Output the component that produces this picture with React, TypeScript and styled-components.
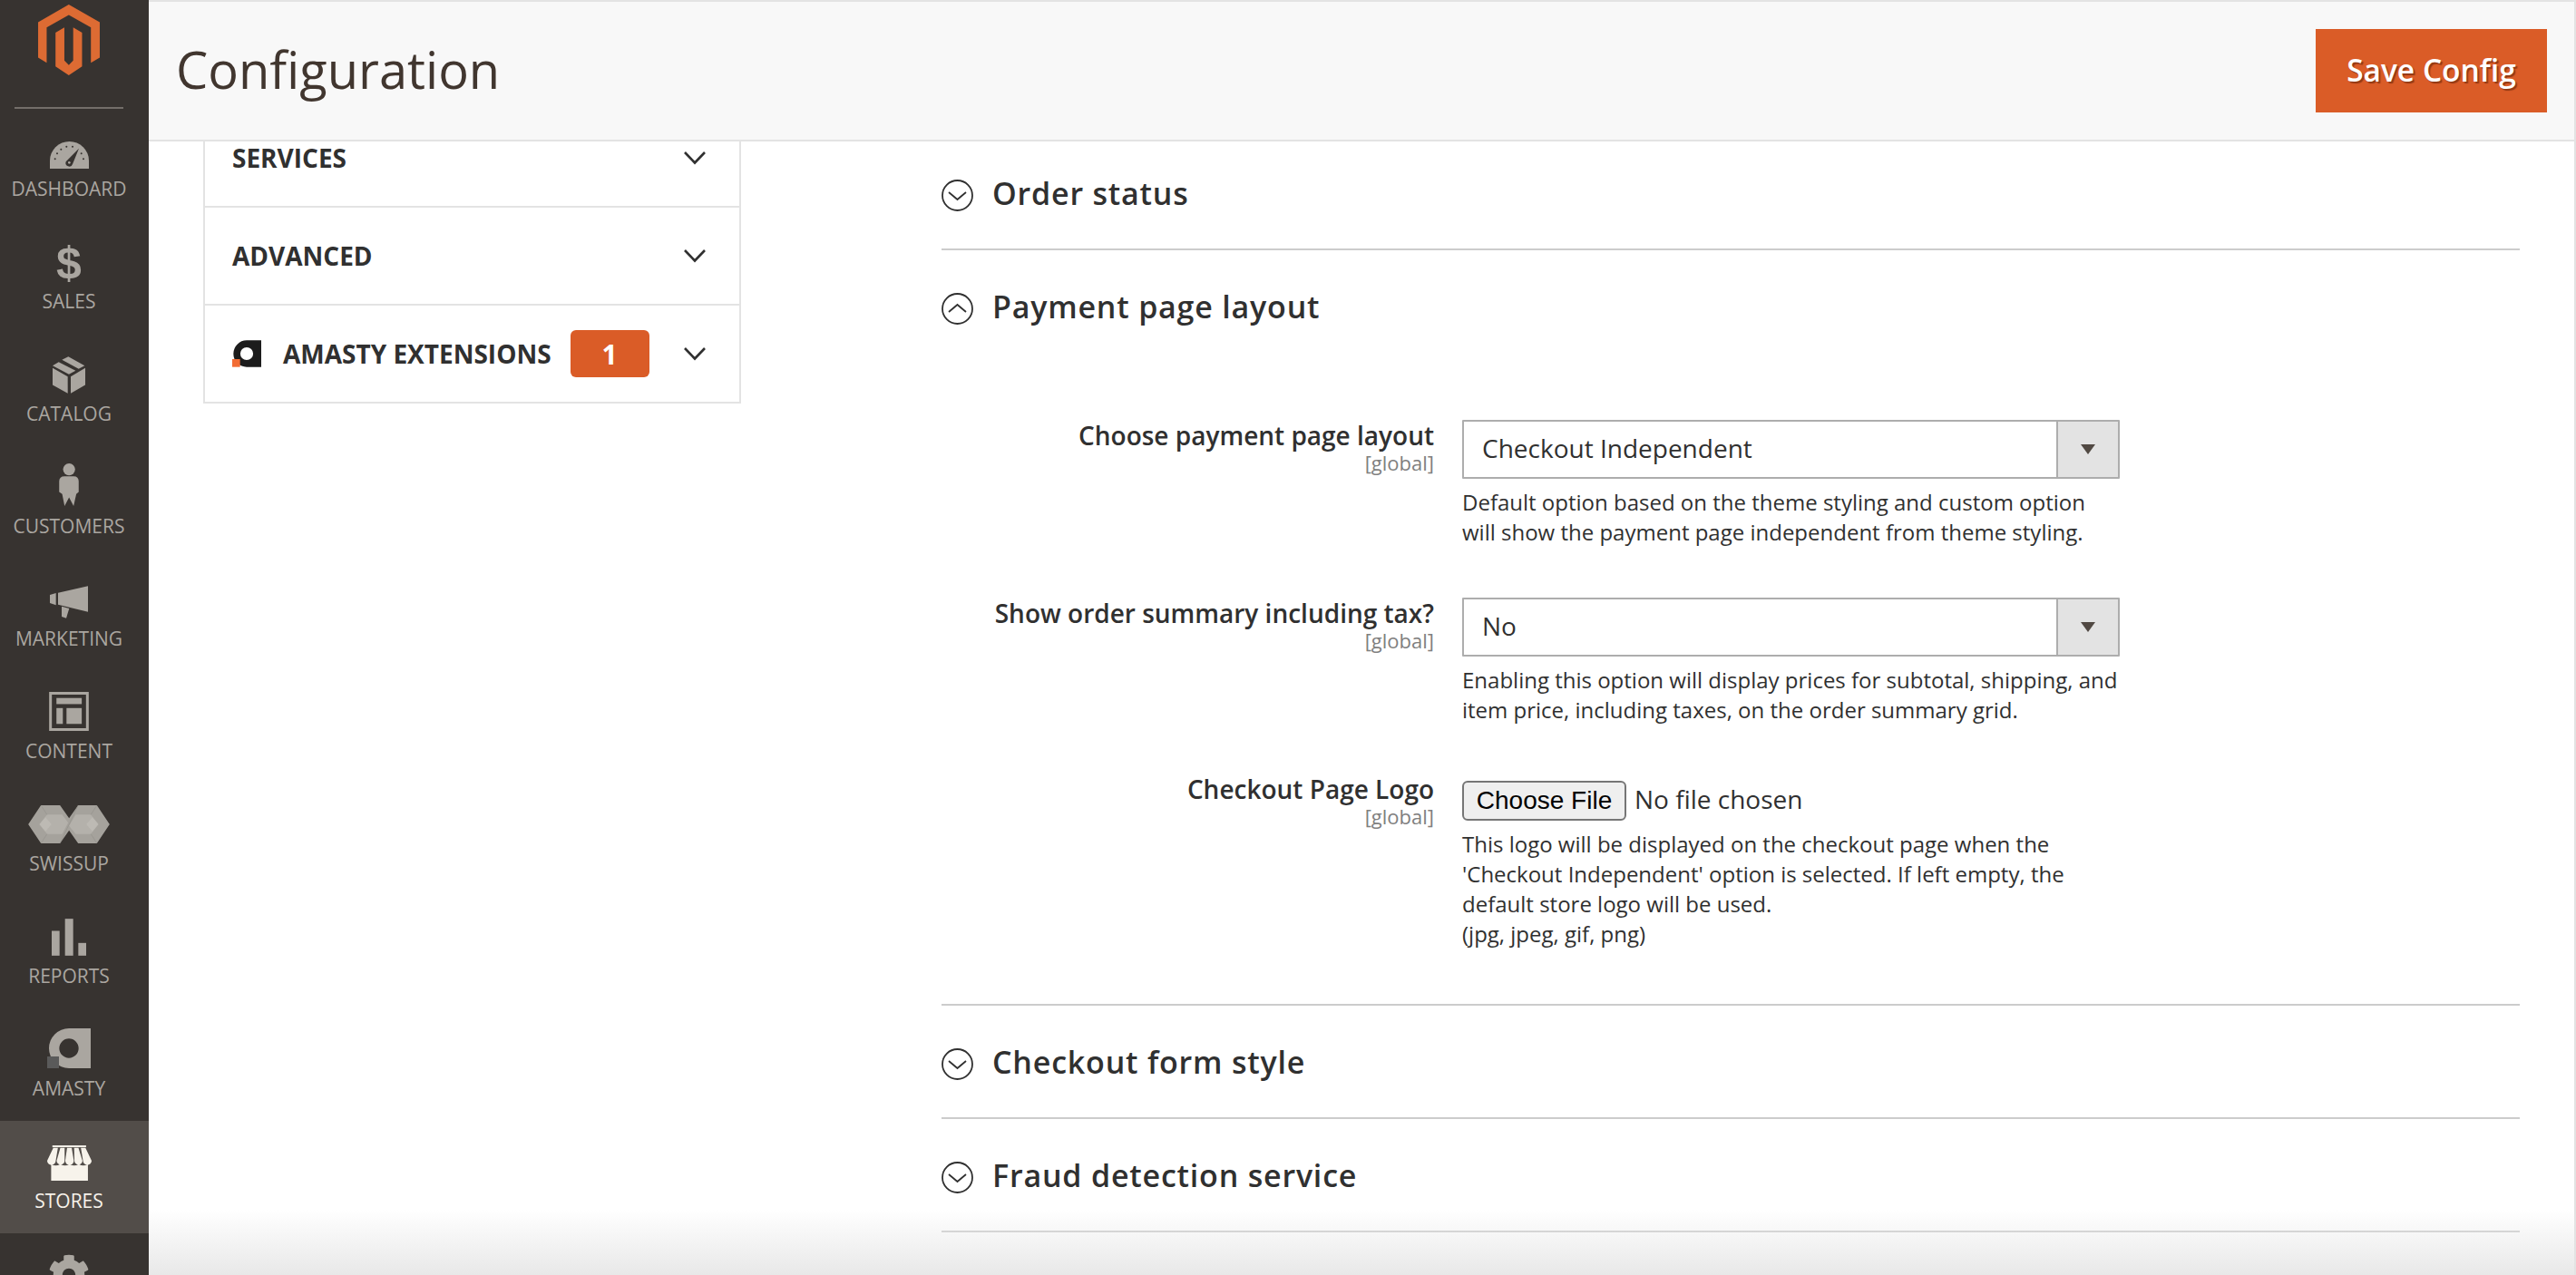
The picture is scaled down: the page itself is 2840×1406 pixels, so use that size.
import React from "react";
import styled, { createGlobalStyle } from "styled-components";
import { FaCog } from "react-icons/fa";

const colors = {
  rail: "#373330",
  railActive: "#524d49",
  railText: "#aaa6a0",
  railTextActive: "#f7f3eb",
  orange: "#da5c27",
  ink: "#303030",
  line: "#e3e3e3",
  rule: "#cccccc",
};

const GlobalStyle = createGlobalStyle`
  html, body {
    margin: 0;
    height: 100%;
    overflow: hidden;
    background: #fff;
    font-family: "Open Sans", sans-serif;
    color: ${colors.ink};
  }
  * { box-sizing: border-box; }
`;

const Page = styled.div`
  display: flex;
  width: 2840px;
  height: 1406px;
  overflow: hidden;
`;

/* left rail */
const Rail = styled.nav`
  flex: 0 0 164px;
  height: 1406px;
  overflow: hidden;
  background: ${colors.rail};
`;

const LogoBox = styled.div`
  display: flex;
  flex-direction: column;
  width: 152px;
  height: 120px;
  padding-top: 5px;
  align-items: center;
`;

const LogoRule = styled.div`
  flex: 0 0 2px;
  width: 120px;
  margin-top: 35px;
  background: #736e69;
`;

const RailItem = styled.a<{ $active?: boolean }>`
  display: flex;
  flex-direction: column;
  align-items: center;
  height: 124px;
  padding-right: 12px;
  background: ${(p) => (p.$active ? colors.railActive : "transparent")};
  color: ${(p) => (p.$active ? colors.railTextActive : colors.railText)};
`;

const RailIcon = styled.div`
  display: flex;
  align-items: flex-end;
  justify-content: center;
  height: 66px;
  margin-bottom: 10px;
`;

const RailLabel = styled.span`
  font-size: 21px;
  line-height: 24px;
  text-transform: uppercase;
  white-space: nowrap;
`;

const Gear = styled(FaCog)`
  flex: none;
  margin-bottom: -3px;
`;

/* main column */
const Main = styled.main`
  position: relative;
  flex: 1;
  height: 1406px;
  overflow: hidden;
  border-right: 2px solid ${colors.line};
`;

const Header = styled.header`
  display: flex;
  align-items: center;
  justify-content: space-between;
  height: 156px;
  padding: 0 30px;
  background: #f8f8f8;
  border-top: 2px solid ${colors.line};
  border-bottom: 2px solid ${colors.line};
`;

const Title = styled.h1`
  margin: 0 0 4px;
  font-size: 56px;
  font-weight: 400;
  line-height: 76px;
  color: #41362f;
`;

const SaveButton = styled.button`
  width: 255px;
  height: 92px;
  padding: 0 0 3px;
  border: 0;
  background: ${colors.orange};
  color: #fff;
  font-family: "Open Sans", sans-serif;
  font-size: 33.5px;
  font-weight: 600;
  text-shadow: 2px 2px 1px rgba(90, 30, 5, 0.55);
`;

const Body = styled.div`
  display: flex;
  justify-content: space-between;
  padding: 0 60px 0 60px;
`;

/* config tabs on the left */
const Tabs = styled.div`
  flex: 0 0 593px;
  align-self: flex-start;
  border: 2px solid ${colors.line};
  border-top: 0;
`;

const TabRow = styled.div<{ $cut?: boolean }>`
  display: flex;
  align-items: ${(p) => (p.$cut ? "flex-start" : "center")};
  height: ${(p) => (p.$cut ? "71px" : "108px")};
  padding: 0 36px 0 30px;
  & + & {
    border-top: 2px solid ${colors.line};
  }
`;

const TabName = styled.span`
  font-size: 28px;
  line-height: 36px;
  font-weight: 700;
  text-transform: uppercase;
  white-space: nowrap;
`;

const TabLogo = styled.svg`
  width: 32px;
  height: 30px;
  margin-right: 24px;
`;

const Badge = styled.span`
  display: flex;
  align-items: center;
  justify-content: center;
  width: 87px;
  height: 52px;
  margin-left: 21px;
  border-radius: 6px;
  background: ${colors.orange};
  color: #fff;
  font-size: 30px;
  font-weight: 700;
`;

const Chevron = styled.svg`
  width: 26px;
  height: 16px;
  margin-left: auto;
  fill: none;
  stroke: ${colors.ink};
  stroke-width: 2.6;
`;

const TabChevron = styled(Chevron)<{ $cut?: boolean }>`
  margin-top: ${(p) => (p.$cut ? "10px" : "0")};
`;

/* settings on the right */
const Settings = styled.div`
  flex: 0 0 1740px;
`;

const Section = styled.section`
  & + & {
    border-top: 2px solid ${colors.rule};
  }
`;

const SectionHead = styled.div<{ $first?: boolean }>`
  display: flex;
  align-items: center;
  gap: 21px;
  padding: ${(p) => (p.$first ? "42px" : "47px")} 0 41px;
`;

const SectionTitle = styled.h2`
  margin: -4px 0 0;
  font-size: 34px;
  line-height: 35px;
  font-weight: 600;
  letter-spacing: 0.8px;
  white-space: nowrap;
`;

const Toggle = styled.svg`
  flex: 0 0 35px;
  width: 35px;
  height: 35px;
  fill: none;
  stroke: ${colors.ink};
  stroke-width: 1.8;
`;

const FieldList = styled.div`
  display: flex;
  flex-direction: column;
  gap: 56px;
  padding: 64px 0 61px;
`;

const Field = styled.div`
  display: grid;
  grid-template-columns: 543px 725px;
  column-gap: 31px;
`;

const FileField = styled(Field)`
  margin-top: -2px;
`;

const LabelCell = styled.div`
  text-align: right;
`;

const Label = styled.label`
  display: block;
  font-size: 28px;
  line-height: 34px;
  font-weight: 600;
  white-space: nowrap;
`;

const Scope = styled.div`
  font-size: 22px;
  line-height: 26px;
  color: #808080;
`;

const SelectBox = styled.div`
  display: flex;
  height: 65px;
  border: 2px solid #adadad;
  border-radius: 1px;
`;

const NativeSelect = styled.select`
  flex: 1;
  min-width: 0;
  padding: 0 0 3px 20px;
  border: 0;
  outline: 0;
  appearance: none;
  background: #fff;
  color: ${colors.ink};
  font-family: "Open Sans", sans-serif;
  font-size: 28px;
`;

const SelectArrow = styled.div`
  display: flex;
  align-items: center;
  justify-content: center;
  flex: 0 0 68px;
  border-left: 2px solid #adadad;
  background: ${colors.line};
  &::after {
    content: "";
    border-left: 8px solid transparent;
    border-right: 8px solid transparent;
    border-top: 11px solid #514943;
  }
`;

const FileInput = styled.input`
  display: block;
  margin-top: 8px;
  height: 44px;
  width: 500px;
  font-family: "Open Sans", sans-serif;
  font-size: 28px;
  color: ${colors.ink};
  &::file-selector-button {
    width: 181px;
    height: 44px;
    margin-right: 9px;
    padding: 0;
    border: 2px solid #767676;
    border-radius: 6px;
    background: #efefef;
    color: #000;
    font-family: "Liberation Sans", sans-serif;
    font-size: 28px;
  }
`;

const Help = styled.p`
  margin: 9px 0 0;
  font-size: 24px;
  line-height: 33px;
  white-space: nowrap;
`;

const BottomFade = styled.div`
  position: absolute;
  left: 0;
  right: 0;
  bottom: 0;
  height: 72px;
  background: linear-gradient(rgba(232, 232, 232, 0), #e8e8e8);
  pointer-events: none;
`;

const Glyph = styled.span`
  margin-bottom: -3px;
  font-family: "Liberation Sans", sans-serif;
  font-size: 50px;
  font-weight: 700;
  line-height: 46px;
`;

const Logo = () => (
  <svg width="70" height="80" viewBox="124 15 209 240" fill="#dd6b33">
    <path d="M228 15 333 75V195L303 213V93L228 50 153 93V213L124 195V75Z" />
    <path d="M183 110 213 93V205L228 220 243 205V93L273 110V225L228 255 183 225Z" />
  </svg>
);

const GaugeIcon = () => (
  <svg width="43" height="30" viewBox="162 465 129 90">
    <path fill="currentColor" d="M162 555V528A64.5 63 0 0 1 291 528V555Z" />
    <g fill={colors.rail}>
      <circle cx="179" cy="523" r="3" />
      <circle cx="186" cy="505" r="3" />
      <circle cx="199" cy="491" r="3" />
      <circle cx="217" cy="482" r="3" />
      <circle cx="237" cy="482" r="3" />
      <circle cx="273" cy="523" r="3" />
      <circle cx="266" cy="505" r="3" />
      <path d="M215 532 258 488 237 540A11 11 0 0 1 215 532Z" />
    </g>
    <circle cx="226" cy="535" r="4" fill="currentColor" />
  </svg>
);

const BoxIcon = () => (
  <svg width="36" height="41" viewBox="172 1178 108 122" fill="currentColor">
    <path d="M224 1178 278 1208 258 1219 203 1189Z" />
    <path d="M192 1196 248 1225 226 1237 172 1208Z" />
    <path d="M172 1216 222 1244V1300L172 1272Z" />
    <path d="M232 1244 280 1216V1272L232 1300Z" />
  </svg>
);

const PersonIcon = () => (
  <svg width="22" height="47" viewBox="197 90 65 142" fill="currentColor">
    <circle cx="230" cy="110" r="20" />
    <path d="M197 150Q197 133 215 133H245Q262 133 262 150V185L254 192 245 232 230 203 215 232 207 192 197 185Z" />
  </svg>
);

const MegaphoneIcon = () => (
  <svg width="42" height="36" viewBox="165 497 126 106" fill="currentColor">
    <path d="M165 526 185 520V560L165 553Z" />
    <path d="M192 519 291 497V582L192 558Z" />
    <path d="M204 564 229 571 219 603 204 598Z" />
  </svg>
);

const ContentIcon = () => (
  <svg width="44" height="43" viewBox="163 850 130 128" fill="currentColor">
    <path fillRule="evenodd" d="M163 850H293V978H163ZM172 859V969H284V859Z" />
    <rect x="187" y="870" width="83" height="20" />
    <rect x="187" y="903" width="21" height="52" />
    <rect x="220" y="903" width="50" height="52" />
  </svg>
);

const SwissupIcon = () => (
  <svg width="90" height="42" viewBox="93 1227 269 126">
    <path fill="#a5a29c" d="M93 1290 135 1227H198L228 1270 258 1227H320L362 1290 320 1353H258L228 1310 198 1353H135Z" />
    <path fill="#b4b1ab" d="M130 1290 155 1258H205L225 1285 205 1322H155ZM325 1290 300 1258H250L228 1295 250 1322H300Z" />
    <path fill="#bdbab4" d="M130 1290 150 1267 170 1290 150 1313ZM325 1290 305 1267 285 1290 305 1313Z" />
    <path fill="none" stroke="#8f8c86" strokeWidth="1.5" d="M198 1353 258 1227M135 1227 155 1258M320 1227 300 1258M135 1353 155 1322M320 1353 300 1322" />
  </svg>
);

const BarsIcon = () => (
  <svg width="38" height="41" viewBox="171 160 114 122" fill="currentColor">
    <rect x="171" y="200" width="26" height="82" />
    <rect x="215" y="160" width="27" height="122" />
    <rect x="259" y="240" width="26" height="42" />
  </svg>
);

const AmastyShape = ({ dot, body }: { dot: string; body: string }) => (
  <>
    <path
      fill={body}
      fillRule="evenodd"
      d="M228 528H300V660H228A66 66 0 0 1 228 528ZM228 562A32 32 0 1 0 228 626 32 32 0 1 0 228 562Z"
    />
    <rect x="156" y="621" width="39" height="39" fill={dot} />
  </>
);

const StoreIcon = () => (
  <svg width="49" height="39" viewBox="155 918 145 115" fill="currentColor">
    <rect x="172" y="918" width="110" height="6" />
    <path d="M175 926H190L183 968A14 14 0 0 1 155 968Z" />
    <path d="M198 926H212L212 968A13 13 0 0 1 186 968Z" />
    <path d="M220 926H235L242 968A14 14 0 0 1 214 968Z" />
    <path d="M243 926H257L270 968A13 13 0 0 1 244 968Z" />
    <path d="M265 926H280L300 968A14 14 0 0 1 272 968Z" />
    <path d="M168 979Q183 988 198 979 213 988 228 979 243 988 258 979 273 988 288 979V1033H168Z" />
  </svg>
);

const railItems = [
  { label: "Dashboard", icon: <GaugeIcon /> },
  { label: "Sales", icon: <Glyph>$</Glyph> },
  { label: "Catalog", icon: <BoxIcon /> },
  { label: "Customers", icon: <PersonIcon /> },
  { label: "Marketing", icon: <MegaphoneIcon /> },
  { label: "Content", icon: <ContentIcon /> },
  { label: "Swissup", icon: <SwissupIcon /> },
  { label: "Reports", icon: <BarsIcon /> },
  {
    label: "Amasty",
    icon: (
      <svg width="48" height="44" viewBox="156 528 144 132">
        <AmastyShape dot="#5a5a5a" body="currentColor" />
      </svg>
    ),
  },
  { label: "Stores", icon: <StoreIcon />, active: true },
];

const ChevronDown = ({ cut }: { cut?: boolean }) => (
  <TabChevron viewBox="0 0 26 16" $cut={cut}>
    <polyline points="2,2 13,13.5 24,2" />
  </TabChevron>
);

const SectionToggle = ({ open }: { open?: boolean }) => (
  <Toggle viewBox="0 0 35 35">
    <circle cx="17.5" cy="17.5" r="16.5" />
    <polyline points={open ? "8,21 17.5,13 27,21" : "8,14 17.5,22 27,14"} />
  </Toggle>
);

const Fold = ({ title, first }: { title?: string; first?: boolean }) => (
  <Section>
    <SectionHead $first={first}>
      <SectionToggle />
      {title && <SectionTitle>{title}</SectionTitle>}
    </SectionHead>
  </Section>
);

const SelectField = ({
  label,
  value,
  help,
}: {
  label: string;
  value: string;
  help: React.ReactNode;
}) => (
  <Field>
    <LabelCell>
      <Label>{label}</Label>
      <Scope>[global]</Scope>
    </LabelCell>
    <div>
      <SelectBox>
        <NativeSelect defaultValue={value}>
          <option>{value}</option>
        </NativeSelect>
        <SelectArrow />
      </SelectBox>
      <Help>{help}</Help>
    </div>
  </Field>
);

const App = () => {
  return (
    <Page>
      <GlobalStyle />
      <Rail>
        <LogoBox>
          <Logo />
          <LogoRule />
        </LogoBox>
        {railItems.map((item) => (
          <RailItem key={item.label} $active={item.active}>
            <RailIcon>{item.icon}</RailIcon>
            <RailLabel>{item.label}</RailLabel>
          </RailItem>
        ))}
        {/* next item is cut by the window, only the top of its gear shows */}
        <RailItem>
          <RailIcon>
            <Gear size={46} />
          </RailIcon>
        </RailItem>
      </Rail>

      <Main>
        <Header>
          <Title>Configuration</Title>
          <SaveButton>Save Config</SaveButton>
        </Header>

        <Body>
          <Tabs>
            <TabRow $cut>
              <TabName>Services</TabName>
              <ChevronDown cut />
            </TabRow>
            <TabRow>
              <TabName>Advanced</TabName>
              <ChevronDown />
            </TabRow>
            <TabRow>
              <TabLogo viewBox="156 528 144 132">
                <AmastyShape dot="#f26c33" body="#1c1c1c" />
              </TabLogo>
              <TabName>Amasty Extensions</TabName>
              <Badge>1</Badge>
              <ChevronDown />
            </TabRow>
          </Tabs>

          <Settings>
            <Fold title="Order status" first />
            <Section>
              <SectionHead>
                <SectionToggle open />
                <SectionTitle>Payment page layout</SectionTitle>
              </SectionHead>
              <FieldList>
                <SelectField
                  label="Choose payment page layout"
                  value="Checkout Independent"
                  help={
                    <>
                      Default option based on the theme styling and custom option
                      <br />
                      will show the payment page independent from theme styling.
                    </>
                  }
                />
                <SelectField
                  label="Show order summary including tax?"
                  value="No"
                  help={
                    <>
                      Enabling this option will display prices for subtotal, shipping, and
                      <br />
                      item price, including taxes, on the order summary grid.
                    </>
                  }
                />
                <FileField>
                  <LabelCell>
                    <Label>Checkout Page Logo</Label>
                    <Scope>[global]</Scope>
                  </LabelCell>
                  <div>
                    <FileInput type="file" />
                    <Help>
                      This logo will be displayed on the checkout page when the
                      <br />
                      'Checkout Independent' option is selected. If left empty, the
                      <br />
                      default store logo will be used.
                      <br />
                      (jpg, jpeg, gif, png)
                    </Help>
                  </div>
                </FileField>
              </FieldList>
            </Section>
            <Fold title="Checkout form style" />
            <Fold title="Fraud detection service" />
            <Fold />
          </Settings>
        </Body>
        <BottomFade />
      </Main>
    </Page>
  );
};

export default App;
